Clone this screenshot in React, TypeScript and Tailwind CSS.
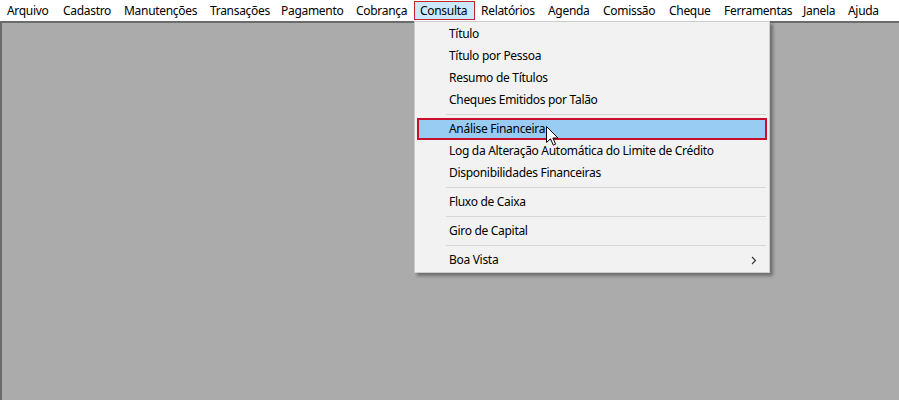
import React from 'react';

const menus: { label: string; w: number }[] = [
  { label: 'Arquivo', w: 56 },
  { label: 'Cadastro', w: 61 },
  { label: 'Manutenções', w: 86 },
  { label: 'Transações', w: 71 },
  { label: 'Pagamento', w: 75 },
  { label: 'Cobrança', w: 64 },
  { label: 'Consulta', w: 61 },
  { label: 'Relatórios', w: 67 },
  { label: 'Agenda', w: 55 },
  { label: 'Comissão', w: 66 },
  { label: 'Cheque', w: 55 },
  { label: 'Ferramentas', w: 79 },
  { label: 'Janela', w: 45 },
  { label: 'Ajuda', w: 45 },
];

type Entry = { label: string; active?: boolean; sub?: boolean } | 'sep';

const entries: Entry[] = [
  { label: 'Título' },
  { label: 'Título por Pessoa' },
  { label: 'Resumo de Títulos' },
  { label: 'Cheques Emitidos por Talão' },
  'sep',
  { label: 'Análise Financeira', active: true },
  { label: 'Log da Alteração Automática do Limite de Crédito' },
  { label: 'Disponibilidades Financeiras' },
  'sep',
  { label: 'Fluxo de Caixa' },
  'sep',
  { label: 'Giro de Capital' },
  'sep',
  { label: 'Boa Vista', sub: true },
];

function Cursor() {
  return (
    <svg width="14" height="21" viewBox="0 0 14 21" className="absolute left-[546px] top-[126px]">
      <path
        d="M0.5 0.5 L0.5 16.5 L4.5 12.8 L7.3 19.2 L9.6 18.2 L6.9 12 L12 12 Z"
        fill="#fff"
        stroke="#000"
        strokeWidth="1"
        strokeLinejoin="round"
      />
    </svg>
  );
}

export default function App() {
  return (
    <div
      className="relative w-[899px] h-[400px] overflow-hidden bg-white text-[12px] tracking-[-0.3px] text-black flex flex-col"
      style={{ fontFamily: '"Segoe UI", "Noto Sans", Arial, sans-serif' }}
    >
      {/* barra de menus */}
      <div className="h-[21px] flex items-stretch pl-[1px] bg-white">
        {menus.map((m) => (
          <div
            key={m.label}
            style={{ width: m.w }}
            className={`flex items-center pl-[5px] leading-none whitespace-nowrap ${
              m.label === 'Consulta'
                ? 'bg-[#cce8ff] border border-[#c0272d] my-[1px]'
                : 'border border-transparent'
            }`}
          >
            {m.label}
          </div>
        ))}
      </div>

      {/* área MDI */}
      <div className="flex-1 bg-[#ababab] border-t-2 border-l-2 border-[#6b6b6b]" />

      {/* menu aberto */}
      <div className="absolute left-[414px] top-[21px] w-[356px] bg-[#f2f2f2] border border-[#cccccc] shadow-[3px_3px_3px_rgba(0,0,0,0.35)] py-[1px] px-[2px]">
        {entries.map((e, i) =>
          e === 'sep' ? (
            <div key={i} className="h-[7px] flex items-center pl-[29px] pr-[1px]">
              <div className="h-px w-full bg-[#d7d7d7]" />
            </div>
          ) : (
            <div
              key={i}
              className={`h-[22px] flex items-center pr-[10px] whitespace-nowrap ${
                e.active ? 'bg-[#99ccf3] border-2 border-[#c8102e] pl-[30px]' : 'pl-[32px]'
              }`}
            >
              <span className="flex-1">{e.label}</span>
              {e.sub && (
                <svg width="6" height="9" viewBox="0 0 6 9">
                  <polyline points="1,1 4.5,4.5 1,8" fill="none" stroke="#333" strokeWidth="1.1" />
                </svg>
              )}
            </div>
          )
        )}
      </div>

      <Cursor />
    </div>
  );
}
